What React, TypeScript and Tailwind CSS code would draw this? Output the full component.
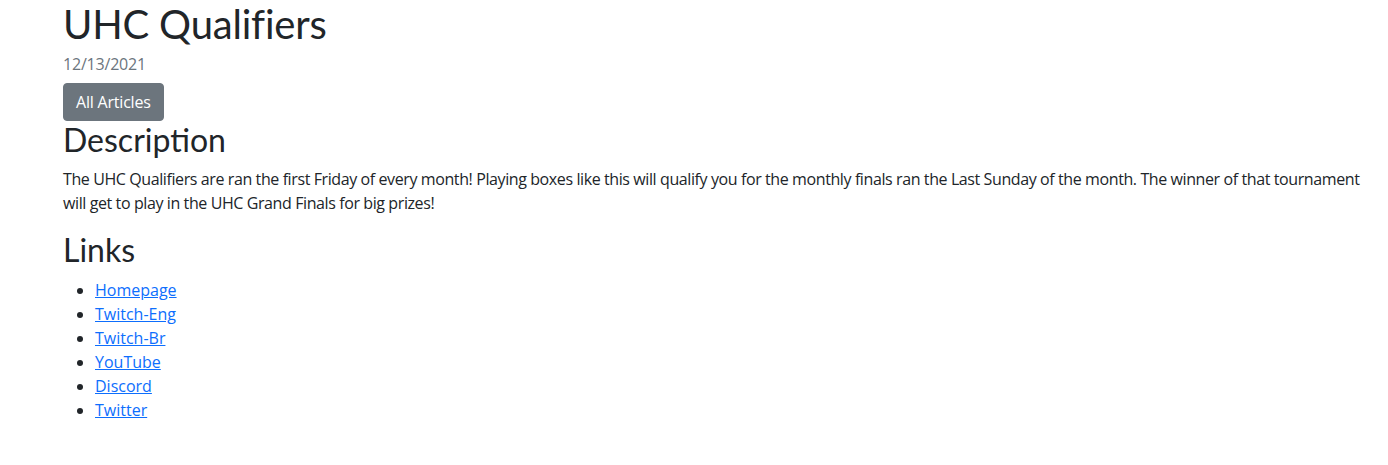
const links = ['Homepage', 'Twitch-Eng', 'Twitch-Br', 'YouTube', 'Discord', 'Twitter']

export default function App() {
  return (
    <div className="bg-white text-[#212529] font-['Open_Sans',sans-serif] text-[16px] leading-[1.5] pl-[63px] pr-[8px]">
      <h1 className="font-['Lato',sans-serif] text-[40px] leading-[1.2] font-normal mb-[4px] tracking-[-0.2px]">UHC Qualifiers</h1>
      <div className="text-[#6c757d] mb-[7px] tracking-[-0.2px]">12/13/2021</div>
      <button className="bg-[#6c757d] text-white px-3 py-[6px] rounded-[4px] border border-[#6c757d] leading-[1.5] tracking-[-0.2px]">
        All Articles
      </button>
      <h2 className="font-['Lato',sans-serif] text-[32px] leading-[1.2] font-normal mb-2">Description</h2>
      <p className="mb-4 tracking-[-0.4px]">
        The UHC Qualifiers are ran the first Friday of every month! Playing boxes like this will qualify you for the monthly finals ran the Last Sunday of the month. The winner of that tournament will get to play in the UHC Grand Finals for big prizes!
      </p>
      <h2 className="font-['Lato',sans-serif] text-[32px] leading-[1.2] font-normal mb-2">Links</h2>
      <ul className="list-disc pl-8">
        {links.map((l) => (
          <li key={l}>
            <a href="#" className="text-[#0d6efd] underline">{l}</a>
          </li>
        ))}
      </ul>
    </div>
  )
}
